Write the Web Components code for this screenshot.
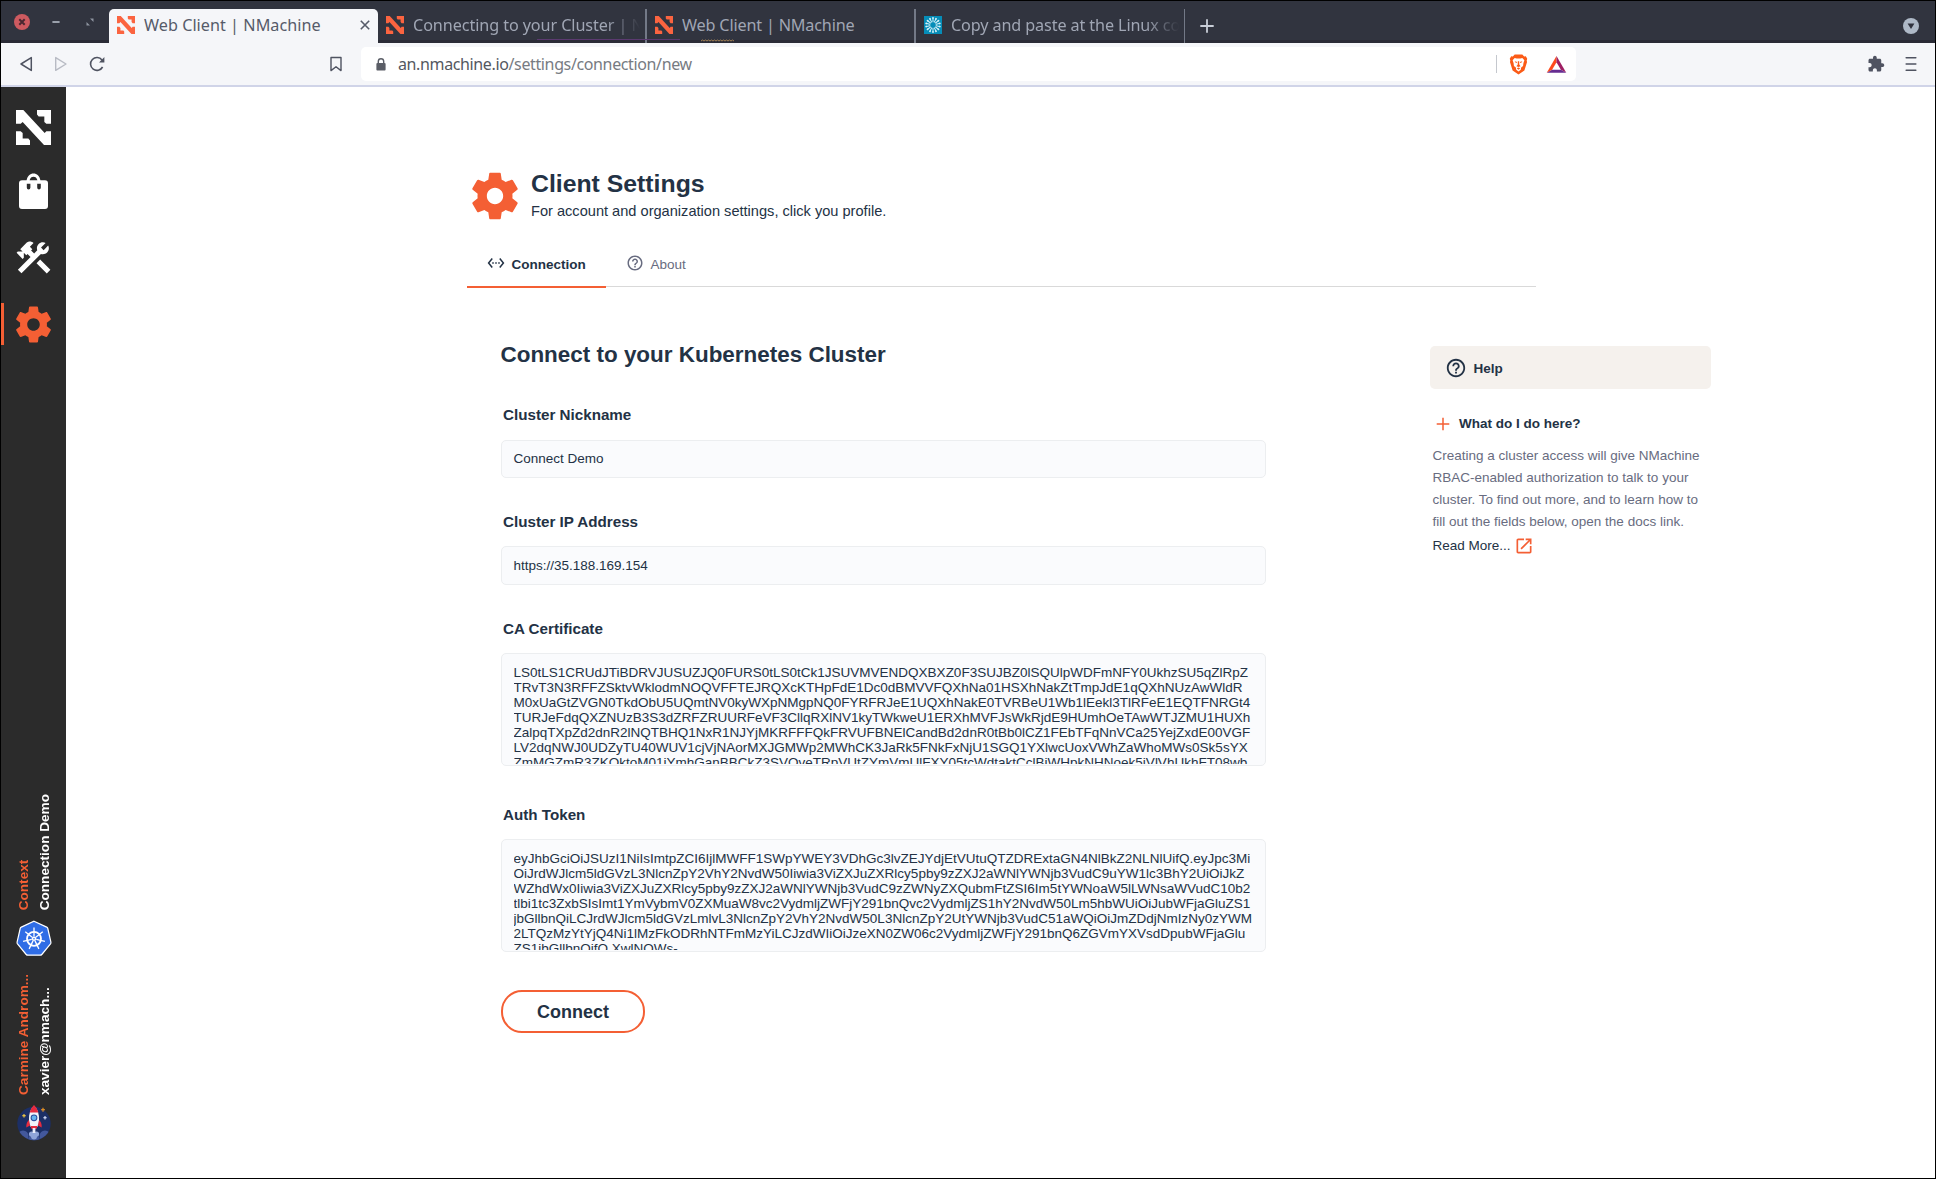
<!DOCTYPE html>
<html lang="en">
<head>
<meta charset="utf-8">
<title>Web Client | NMachine</title>
<style>
html,body{margin:0;height:100%}
body{background:#fff;font-family:"Liberation Sans",Arial,sans-serif;color:#233245;overflow:hidden}
</style>
</head>
<body>
<browser-window></browser-window>
<script>
const N_MARK='<path d="M0 0H22L86 70 91 64H105V106H84L20 36 14 42H0ZM63 0H105V42H91L85 36V20H68L63 14ZM0 64H14L20 70V86H37L42 92V106H0Z"/>';
const ICONS={
nmark:['0 0 105 106',N_MARK],
gear:['0 0 24 24','<path d="M19.43 12.98c.04-.32.07-.64.07-.98s-.03-.66-.07-.98l2.11-1.65c.19-.15.24-.42.12-.64l-2-3.46c-.12-.22-.39-.3-.61-.22l-2.49 1c-.52-.4-1.08-.73-1.69-.98l-.38-2.65C14.46 2.18 14.25 2 14 2h-4c-.25 0-.46.18-.49.42l-.38 2.65c-.61.25-1.17.59-1.69.98l-2.49-1c-.23-.09-.49 0-.61.22l-2 3.46c-.13.22-.07.49.12.64l2.11 1.65c-.04.32-.07.65-.07.98s.03.66.07.98l-2.11 1.65c-.19.15-.24.42-.12.64l2 3.46c.12.22.39.3.61.22l2.49-1c.52.4 1.08.73 1.69.98l.38 2.65c.03.24.24.42.49.42h4c.25 0 .46-.18.49-.42l.38-2.65c.61-.25 1.17-.59 1.69-.98l2.49 1c.23.09.49 0 .61-.22l2-3.46c.12-.22.07-.49-.12-.64l-2.11-1.65zM12 15.5c-1.93 0-3.5-1.57-3.5-3.5s1.57-3.5 3.5-3.5 3.5 1.57 3.5 3.5-1.57 3.5-3.5 3.5z"/>'],
ethernet:['0 0 24 24','<path d="M7.77 6.76 6.23 5.48.82 12l5.41 6.52 1.54-1.28L3.42 12l4.35-5.24zM7 13h2v-2H7v2zm10-2h-2v2h2v-2zm-6 2h2v-2h-2v2zm6.77-7.52-1.54 1.28L20.58 12l-4.35 5.24 1.54 1.28L23.18 12l-5.41-6.52z"/>'],
help:['0 0 24 24','<path d="M11 18h2v-2h-2v2zm1-16C6.48 2 2 6.48 2 12s4.48 10 10 10 10-4.48 10-10S17.52 2 12 2zm0 18c-4.41 0-8-3.59-8-8s3.59-8 8-8 8 3.59 8 8-3.59 8-8 8zm0-14c-2.21 0-4 1.79-4 4h2c0-1.1.9-2 2-2s2 .9 2 2c0 2-3 1.75-3 5h2c0-2.25 3-2.5 3-5 0-2.21-1.79-4-4-4z"/>'],
open:['0 0 24 24','<path d="M19 19H5V5h7V3H5c-1.11 0-2 .9-2 2v14c0 1.1.89 2 2 2h14c1.1 0 2-.9 2-2v-7h-2v7zM14 3v2h3.59l-9.83 9.83 1.41 1.41L19 6.41V10h2V3h-7z"/>'],
plus:['0 0 14 14','<path d="M7 .7V13.3M.7 7H13.3" fill="none" stroke="currentColor" stroke-width="1.5"/>'],
bag:['0 0 36 36','<path fill-rule="evenodd" d="M4 7.3H8.6C9.6 3 12 .6 15.5 .6S21.500 3 22.400 7.300H27Q30 7.300 30 10.300V33Q30 36 27 36H4Q1 36 1 33V10.300Q1 7.300 4 7.300ZM11.600 7.300H19.400C18.700 4.900 17.500 3.800 15.500 3.800S12.300 4.900 11.600 7.300ZM8.800 10.700V14.500Q8.800 16.500 10.600 16.500T12.400 14.500V10.700ZM19.200 10.700V14.500Q19.200 16.500 21 16.500T22.800 14.500V10.700Z"/>'],
tools:['0 0 24 24','<path d="M13.78 15.3L19.78 21.3L21.89 19.14L15.89 13.14L13.78 15.3M17.5 10.1C17.11 10.1 16.69 10.05 16.36 9.91L4.97 21.25L2.86 19.14L10.27 11.74L8.5 9.96L7.78 10.66L6.33 9.25V12.11L5.63 12.81L2.11 9.25L2.81 8.55H5.62L4.22 7.14L7.78 3.58C8.95 2.41 10.83 2.41 12 3.58L9.89 5.74L11.3 7.14L10.59 7.85L12.38 9.63L14.2 7.75C14.06 7.42 14 7 14 6.63C14 4.66 15.56 3.11 17.5 3.11C18.09 3.11 18.61 3.25 19.08 3.53L16.41 6.2L17.91 7.7L20.58 5.03C20.86 5.5 21 6 21 6.63C21 8.55 19.45 10.1 17.5 10.1Z"/>'],
helm:['0 0 36 36',`<path d="M18 1.200 30.700 7.100Q31.600 7.600 31.800 8.500L34.900 22.100Q35.100 23.100 34.500 23.900L25.800 34.500Q25.200 35.200 24.200 35.200H11.800Q10.800 35.200 10.200 34.500L1.500 23.900Q.9 23.100 1.100 22.100L4.200 8.500Q4.400 7.600 5.300 7.100Z" fill="#2f6de6" stroke="#fff" stroke-width="1.200"/>
<g fill="none" stroke="#fff"><circle cx="18" cy="18.800" r="7" stroke-width="1.800"/><g stroke-width="1.300">${[0,1,2,3,4,5,6].map(i=>`<path d="M18 16.500V7.600" transform="rotate(${i*360/7} 18 18.800)"/>`).join('')}</g></g><circle cx="18" cy="18.800" r="2.300" fill="#fff"/><circle cx="18" cy="18.800" r=".8" fill="#2f6de6"/>`],
rocket:['0 0 36 36',`<clipPath id="c"><circle cx="18" cy="18.500" r="16.700"/></clipPath><circle cx="18" cy="18.500" r="16.700" fill="#1c2f66"/>
<g clip-path="url(#c)"><g fill="#43589c"><circle cx="7" cy="31" r="5.500"/><circle cx="29" cy="31" r="5.500"/><circle cx="18" cy="35" r="6"/></g><g fill="#8fa4d8"><circle cx="15.500" cy="29" r="2.600"/><circle cx="20.500" cy="29" r="2.600"/><circle cx="18" cy="31.500" r="3"/></g></g>
<path d="M13.500 14.500Q10 17 10.300 22.500L14 20.500ZM22.500 14.500Q26 17 25.700 22.500L22 20.500Z" fill="#e62b3f"/><path d="M18 .8Q23.500 6 23 15L21.500 22H14.500L13 15Q12.500 6 18 .8Z" fill="#f1f3fa"/><path d="M18 0Q21.500 3 22.400 7.500H13.600Q14.500 3 18 0ZM14.500 21H21.500L20.500 24H15.500Z" fill="#e62b3f"/>
<circle cx="18" cy="12.800" r="3.400" fill="#2c4d9b"/><circle cx="18" cy="12.800" r="2.400" fill="#66b4ee"/><path d="M16.600 23H19.400V28H16.600Z" fill="#e8ecf9"/>
<g stroke-width="1.100" fill="none"><path d="M8 9V12.600M6.200 10.800H9.800" stroke="#ffd23e"/><path d="M27 2.800V6.800M25 4.800H29" stroke="#f59a20"/><path d="M29 11V14.400M27.300 12.700H30.700" stroke="#dbe4ff"/></g>`],
back:['0 0 16 16','<path d="M13.300 1.600V14.400L3 8Z" fill="none" stroke="currentColor" stroke-width="1.500" stroke-linejoin="round"/>'],
fwd:['0 0 16 16','<path d="M2.700 1.600V14.400L13 8Z" fill="none" stroke="currentColor" stroke-width="1.400" stroke-linejoin="round"/>'],
reload:['0 0 16 16','<path d="M13.600 11A6.400 6.400 0 1 1 13 4" fill="none" stroke="currentColor" stroke-width="1.600"/><path d="M15.400 1V6.600H10Z"/>'],
mark:['0 0 16 16','<path d="M3 1.500H13V14.600L8 10.800 3 14.600Z" fill="none" stroke="currentColor" stroke-width="1.400" stroke-linejoin="round"/>'],
lock:['0 0 16 16','<path fill-rule="evenodd" d="M4.600 7V5.500a3.400 3.400 0 0 1 6.800 0V7Q12.600 7 12.600 7.800V13.600Q12.600 14.500 11.800 14.500H4.200Q3.400 14.500 3.400 13.600V7.800Q3.400 7 4.600 7ZM6 7H10V5.500A2 2 0 0 0 6 5.500Z"/>'],
brave:['0 0 20 22','<path d="M6 .6H14L16 2.700 17.700 2.400 19.200 5 18.600 7 19 8.400 16.200 17.300 10 21.600 3.800 17.300 1 8.400 1.400 7 .8 5 2.300 2.400 4 2.700Z" fill="#fb5b17"/><path d="M6 4.200 8 4.600H12L14 4.200 16.200 6.600 15.200 9.400 14.800 12.600 12.800 14.200 12.400 16.600 10 18.400 7.600 16.600 7.200 14.200 5.200 12.600 4.800 9.400 3.800 6.600Z" fill="#fff"/><path d="M6 7.500 8.600 8.400 8 9.400 6.800 9ZM14 7.500 11.400 8.400 12 9.400 13.200 9ZM9.300 7.500H10.700L10.800 11 12.200 12.800 10 13.700 7.800 12.800 9.200 11ZM8.200 14.800 10 14.200 11.800 14.800 10 16.400Z" fill="#fb5b17"/>'],
bat:['0 0 22 20','<path d="M11 1 .8 18.800 6.400 15.500 11 7.600Z" fill="#ff4a1c"/><path d="M11 1 21.200 18.800 15.600 15.500 11 7.600Z" fill="#9e1f63"/><path d="M.8 18.800H21.200L15.600 15.500H6.400Z" fill="#662d91"/>'],
puzzle:['0 0 24 24','<path d="M20.500 11H19V7c0-1.100-.9-2-2-2h-4V3.500C13 2.120 11.880 1 10.500 1S8 2.120 8 3.500V5H4c-1.100 0-1.990.9-1.990 2v3.800H3.500c1.490 0 2.700 1.210 2.700 2.700s-1.210 2.700-2.700 2.700H2V20c0 1.100.9 2 2 2h3.800v-1.500c0-1.490 1.210-2.700 2.700-2.700 1.490 0 2.700 1.210 2.700 2.700V22H17c1.100 0 2-.9 2-2v-4h1.500c1.380 0 2.500-1.120 2.500-2.500S21.880 11 20.500 11z"/>'],
menu:['0 0 16 16','<path d="M3.200 1.700H12.800M3.200 8H12.800M3.200 14.200H12.800" stroke="currentColor" stroke-width="1.600" stroke-linecap="round"/>'],
drop:['0 0 16 16','<circle cx="8" cy="8" r="8" fill="#aeb9c7"/><path d="M4.600 5.600H11.400L8 11Z" fill="#30333e"/>'],
wclose:['0 0 16 16','<circle cx="8" cy="8" r="8" fill="#cd5a60"/><path d="M5.300 5.300 10.700 10.700M10.700 5.300 5.300 10.700" stroke="#4a2730" stroke-width="2"/>'],
wmin:['0 0 16 16','<path d="M4.400 8H11.600" stroke="#9aa0ab" stroke-width="2"/>'],
wmax:['0 0 16 16','<path d="M8 4.500H11.500V8ZM4.500 8V11.500H8Z" fill="#8e94a0"/>'],
x:['0 0 12 12','<path d="M1.800 1.800 10.200 10.200M10.200 1.800 1.800 10.200" stroke="currentColor" stroke-width="1.600"/>'],
add:['0 0 16 16','<path d="M8 1.300V14.700M1.300 8H14.700" stroke="currentColor" stroke-width="1.800"/>'],
burst:['0 0 18 18',`<path d="M0 0H18V18H0Z" fill="#068db8"/><g stroke="#d9f2f8" stroke-linecap="round">${[...Array(14)].map((_,i)=>`<path d="M9 5.800V2.600" stroke-width="1" transform="rotate(${i*360/14} 9 9)"/><path d="M9 2.100V2" stroke-width="1.800" transform="rotate(${i*360/14} 9 9)"/>`).join('')}</g>`]
};
const define=(name,html)=>customElements.define(name,class extends HTMLElement{
  connectedCallback(){
    if(this.shadowRoot)return;
    this.attachShadow({mode:'open'}).innerHTML=typeof html==='function'?html(this):html;
  }
});
define('nm-icon',el=>{
  const [box,art]=ICONS[el.getAttribute('name')],w=el.getAttribute('w'),h=el.getAttribute('h')||w;
  return `<style>:host{display:block;flex:none;line-height:0}svg{display:block;overflow:visible}</style><svg width="${w}" height="${h}" viewBox="${box}" preserveAspectRatio="none" fill="currentColor">${art}</svg>`;
});
define('browser-tab',el=>`<style>
:host{display:flex;align-items:center;box-sizing:border-box;height:34px;padding:0 5px 2px 8px;color:#a0a6b4;font:16.200px "Noto Sans","Open Sans",sans-serif;flex:none;border-right:2px solid #737987}
:host([active]){background:#f5f6f9;color:#565b69;border-radius:5px 5px 0 0;border-right:0;padding-right:7px}
:host([thin]){border-right-width:1px}
.t{flex:1;margin-left:9px;white-space:pre;overflow:hidden;line-height:24px;letter-spacing:var(--ls,0)}
:host([fade]) .t{-webkit-mask-image:linear-gradient(90deg,#000 calc(100% - 34px),transparent)}
nm-icon.f{color:#fb6440}
</style><nm-icon class="f" name="${el.getAttribute('icon')}" w="18"></nm-icon><span class="t"><slot></slot></span>${el.hasAttribute('active')?'<nm-icon name="x" w="12"></nm-icon>':''}`);
define('tab-strip',`<style>
:host{display:flex;height:42px;background:linear-gradient(#31343f 39px,#2a2b36 39px);align-items:flex-end;position:relative}
.win{display:flex;align-items:center;gap:18px;padding-left:13px;width:95px;height:42px;box-sizing:content-box}
browser-tab:nth-of-type(1){width:269px}browser-tab:nth-of-type(2){width:269px}browser-tab:nth-of-type(3){width:269px}browser-tab:nth-of-type(4){width:269px}
.add{color:#c9ced8;padding:0 0 9px 14px}.drop{margin-left:auto;padding:0 16px 9px 0}
.trace{position:absolute;left:536px;bottom:1px}
</style>
<svg class="trace" width="200" height="3"><path d="M0 .5H143" stroke="#5b3a70"/><path d="M164 2l1.500-1 1.500 1 1.500-1 1.500 1 1.500-1 1.500 1 1.500-1 1.500 1 1.500-1 1.500 1 1.500-1 1.500 1 1.500-1 1.500 1 1.500-1 1.500 1 1.500-1 1.500 1 1.500-1 1.500 1 1.500-1 1.500 1" fill="none" stroke="#b08a58" stroke-width=".9"/></svg>
<div class="win"><nm-icon name="wclose" w="16"></nm-icon><nm-icon name="wmin" w="16"></nm-icon><nm-icon name="wmax" w="16"></nm-icon></div>
<browser-tab icon="nmark" active style="--ls:.03px">Web Client | NMachine</browser-tab>
<browser-tab icon="nmark" fade style="--ls:-.09px">Connecting to your Cluster | N</browser-tab>
<browser-tab icon="nmark" style="--ls:-.17px">Web Client | NMachine</browser-tab>
<browser-tab icon="burst" fade thin style="--ls:-.12px">Copy and paste at the Linux co</browser-tab>
<nm-icon class="add" name="add" w="16"></nm-icon><nm-icon class="drop" name="drop" w="16"></nm-icon>`);
define('nav-bar',`<style>
:host{display:flex;align-items:center;height:42px;background:#f5f6f9;border-bottom:2px solid #d0d4e8;color:#4f5361}
.nav{display:flex;gap:19px;padding-left:17px;width:310px}.nav :nth-child(2){color:#b8bbc4}.nav :nth-child(3){margin-left:1px}
.url{display:flex;align-items:center;height:34px;width:1215px;margin-left:17px;background:#fff;border-radius:5px;box-sizing:border-box;padding:0 9px 0 12px;font:16px "Noto Sans","Open Sans",sans-serif;color:#777b82}
.url b{font-weight:400;color:#54585f}.txt{margin-left:9px;flex:1;letter-spacing:-.37px}
.sep{width:1px;height:18px;background:#c5c8ce;margin-right:12px}.bat{margin-left:18px}
.end{display:flex;align-items:center;gap:18px;margin-left:auto;padding-right:16px}
</style><div class="nav"><nm-icon name="back" w="16"></nm-icon><nm-icon name="fwd" w="16"></nm-icon><nm-icon name="reload" w="16"></nm-icon></div><nm-icon name="mark" w="16"></nm-icon>
<div class="url"><nm-icon name="lock" w="16" style="color:#5a5d66"></nm-icon><span class="txt"><b>an.nmachine.io</b>/settings/connection/new</span><span class="sep"></span><nm-icon name="brave" w="19" h="21"></nm-icon><nm-icon class="bat" name="bat" w="21" h="19"></nm-icon></div>
<div class="end"><nm-icon name="puzzle" w="18"></nm-icon><nm-icon name="menu" w="16"></nm-icon></div>`);
define('rail-label',`<style>:host{display:block;writing-mode:vertical-rl;transform:rotate(180deg);font-weight:700;font-size:13.600px;line-height:21px;white-space:nowrap;color:#fff;width:42px}
.top{color:#f45f34}</style><div class="top"><slot name="top"></slot></div><div><slot></slot></div>`);
define('side-rail',`<style>
:host{display:flex;flex-direction:column;width:65px;flex:none;background:#2b2b2b;color:#fff;align-items:center;box-sizing:border-box;padding-top:23px}
.bag{margin:28px 0 0 4px}.tools{margin-top:28px}
.on{align-self:stretch;display:flex;justify-content:center;box-sizing:border-box;border-left:3px solid #f45f34;padding-right:3px;height:42px;align-items:center;margin-top:25px;color:#f45f34}
.foot{margin-top:auto;display:flex;flex-direction:column;align-items:center;padding-bottom:37px}
.foot rail-label{margin-left:1px}.k{margin:10px 0 12px}.r{margin-top:10px}
</style><nm-icon name="nmark" w="35"></nm-icon><nm-icon class="bag" name="bag" w="36"></nm-icon><nm-icon class="tools" name="tools" w="41"></nm-icon><div class="on"><nm-icon name="gear" w="43"></nm-icon></div>
<div class="foot"><rail-label><span slot="top">Context</span>Connection Demo</rail-label><nm-icon class="k" name="helm" w="36"></nm-icon><rail-label style="height:127px"><span slot="top">Carmine Androm...</span>xavier@nmach...</rail-label><nm-icon class="r" name="rocket" w="36"></nm-icon></div>`);
define('page-header',`<style>:host{display:flex;gap:8px;height:57px}nm-icon{color:#f45f34;margin-top:.5px}
h1{margin:3px 0 0;font-size:24.800px;line-height:28px}p{margin:0;font-size:14.600px;line-height:26px;white-space:nowrap}</style>
<nm-icon name="gear" w="56"></nm-icon><div><h1><slot name="title"></slot></h1><p><slot></slot></p></div>`);
define('tab-item',el=>`<style>:host{display:flex;align-items:center;box-sizing:border-box;height:46px;font-size:13.500px;color:#686c80;padding:1px 20px 2px;line-height:16px}
:host([active]){color:#233245;font-weight:700;border-bottom:2px solid #f45f34;padding-bottom:0;width:139px}nm-icon{margin:-3px 6.500px 0 0}span{padding-top:1px}</style><nm-icon name="${el.getAttribute('icon')}" w="18"></nm-icon><span><slot></slot></span>`);
define('tab-list',`<style>:host{display:flex;height:44px;border-bottom:1px solid #d9d9d9;margin:18px 0 1px}</style><slot></slot>`);
define('form-field',`<style>:host{display:block;margin-bottom:34px}
label{display:block;font-weight:700;font-size:15.200px;line-height:20px;margin-left:2px}
.box{box-sizing:border-box;border:1px solid #eceef0;border-radius:5px;background:#fafbfd;margin-top:14px;height:39px;padding-left:11.500px;font-size:13.500px;line-height:37px;white-space:pre}
:host([first]) .box{margin-top:15px;height:38px;line-height:36px}
:host([area]){margin-bottom:39px}:host([area]) .box{height:113px;line-height:15px}:host([area]) .in{height:99px;padding-top:11px;overflow:hidden}
</style><label><slot name="label"></slot></label><div class="box"><div class="in"><slot></slot></div></div>`);
define('outline-button',`<style>:host{display:flex;box-sizing:border-box;width:144px;height:43px;border:2px solid #f45f34;border-radius:21px;align-items:center;justify-content:center;font-size:18px;font-weight:700;margin-top:-1px;padding-top:2px}</style><slot></slot>`);
define('help-panel',`<style>:host{display:block;width:281px;font-size:13.500px}
.h{display:flex;align-items:center;height:43px;border-radius:5px;background:#f5f1ed;padding-left:15px;gap:6.500px;font-weight:700;box-sizing:border-box}.h span{padding-top:2px}
.q{display:flex;align-items:center;font-weight:700;gap:9px;margin:27px 0 0 6px;line-height:16px}.q nm-icon,.m nm-icon{color:#f45f34}
p{margin:13px 0 0 2.500px;line-height:22px;color:#686c80;white-space:pre}.m{display:flex;align-items:center;gap:3.500px;margin:3px 0 0 2.500px;line-height:20px}</style>
<div class="h"><nm-icon name="help" w="22"></nm-icon><span><slot name="title"></slot></span></div><div class="q"><nm-icon name="plus" w="14"></nm-icon><slot name="question"></slot></div><p><slot></slot></p><div class="m"><slot name="more"></slot><nm-icon name="open" w="20"></nm-icon></div>`);
define('settings-page',`<style>:host{display:block;flex:1;background:#fff;padding:80px 0 0 401px}
.head{width:1069px}.row{display:flex;align-items:flex-start;padding-left:34px;gap:164px}.form{width:765px;padding-top:52px}
h2{margin:0 0 35px -.5px;font-size:22.450px;line-height:30px}help-panel{margin-top:58px}</style>
<div class="head"><page-header><span slot="title">Client Settings</span>For account and organization settings, click you profile.</page-header>
<tab-list><tab-item icon="ethernet" active>Connection</tab-item><tab-item icon="help">About</tab-item></tab-list></div>
<div class="row"><div class="form"><h2>Connect to your Kubernetes Cluster</h2>
<form-field first><span slot="label">Cluster Nickname</span>Connect Demo</form-field>
<form-field><span slot="label">Cluster IP Address</span>https://35.188.169.154</form-field>
<form-field area><span slot="label">CA Certificate</span>LS0tLS1CRUdJTiBDRVJUSUZJQ0FURS0tLS0tCk1JSUVMVENDQXBXZ0F3SUJBZ0lSQUlpWDFmNFY0UkhzSU5qZlRpZ
TRvT3N3RFFZSktvWklodmNOQVFFTEJRQXcKTHpFdE1Dc0dBMVVFQXhNa01HSXhNakZtTmpJdE1qQXhNUzAwWldR
M0xUaGtZVGN0TkdObU5UQmtNV0kyWXpNMgpNQ0FYRFRJeE1UQXhNakE0TVRBeU1Wb1lEekl3TlRFeE1EQTFNRGt4
TURJeFdqQXZNUzB3S3dZRFZRUURFeVF3CllqRXlNV1kyTWkweU1ERXhMVFJsWkRjdE9HUmhOeTAwWTJZMU1HUXh
ZalpqTXpZd2dnR2lNQTBHQ1NxR1NJYjMKRFFFQkFRVUFBNElCandBd2dnR0tBb0lCZ1FEbTFqNnVCa25YejZxdE00VGF
LV2dqNWJ0UDZyTU40WUV1cjVjNAorMXJGMWp2MWhCK3JaRk5FNkFxNjU1SGQ1YXlwcUoxVWhZaWhoMWs0Sk5sYX
ZmMGZmR3ZKOktoM01iYmhGanBBCkZ3SVQveTRpVUtZYmVmUlFXY05tcWdtaktCclBiWHpkNHNoek5iVlVhUkhFT08wb</form-field>
<form-field area><span slot="label">Auth Token</span>eyJhbGciOiJSUzI1NiIsImtpZCI6IjlMWFF1SWpYWEY3VDhGc3lvZEJYdjEtVUtuQTZDRExtaGN4NlBkZ2NLNlUifQ.eyJpc3Mi
OiJrdWJlcm5ldGVzL3NlcnZpY2VhY2NvdW50Iiwia3ViZXJuZXRlcy5pby9zZXJ2aWNlYWNjb3VudC9uYW1lc3BhY2UiOiJkZ
WZhdWx0Iiwia3ViZXJuZXRlcy5pby9zZXJ2aWNlYWNjb3VudC9zZWNyZXQubmFtZSI6Im5tYWNoaW5lLWNsaWVudC10b2
tlbi1tc3ZxbSIsImt1YmVybmV0ZXMuaW8vc2VydmljZWFjY291bnQvc2VydmljZS1hY2NvdW50Lm5hbWUiOiJubWFjaGluZS1
jbGllbnQiLCJrdWJlcm5ldGVzLmlvL3NlcnZpY2VhY2NvdW50L3NlcnZpY2UtYWNjb3VudC51aWQiOiJmZDdjNmIzNy0zYWM
2LTQzMzYtYjQ4Ni1lMzFkODRhNTFmMzYiLCJzdWIiOiJzeXN0ZW06c2VydmljZWFjY291bnQ6ZGVmYXVsdDpubWFjaGlu
ZS1jbGllbnQifQ.XwlNQWs-</form-field>
<outline-button>Connect</outline-button></div>
<help-panel><span slot="title">Help</span><span slot="question">What do I do here?</span>Creating a cluster access will give NMachine
RBAC-enabled authorization to talk to your
cluster. To find out more, and to learn how to
fill out the fields below, open the docs link.<span slot="more">Read More...</span></help-panel></div>`);
define('browser-window',`<style>:host{display:flex;flex-direction:column;box-sizing:border-box;width:1936px;height:1179px;border:1px solid #000;background:#fff}.body{display:flex;flex:1;min-height:0}</style>
<tab-strip></tab-strip><nav-bar></nav-bar><div class="body"><side-rail></side-rail><settings-page></settings-page></div>`);
</script>
</body>
</html>
